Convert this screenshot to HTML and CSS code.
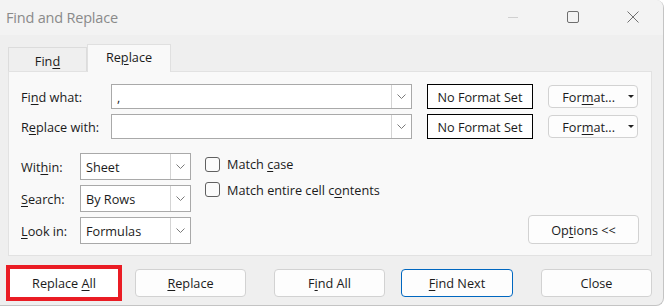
FILE: index.html
```html
<!DOCTYPE html>
<html>
<head>
<meta charset="utf-8">
<link rel="stylesheet" href="styles.css">
</head>
<body>
<div class="window">
  <div class="titlebar">
    <span class="title">Find and Replace</span>
    <div class="controls">
      <span class="ctl"><svg width="12" height="12" viewBox="0 0 12 12"><path d="M1 6.5h10" stroke="#d0d0d0" stroke-width="1"/></svg></span>
      <span class="ctl"><svg width="12" height="12" viewBox="0 0 12 12"><rect x="0.5" y="0.5" width="11" height="11" rx="1.5" fill="none" stroke="#6e6e6e" stroke-width="1"/></svg></span>
      <span class="ctl"><svg width="12" height="12" viewBox="0 0 12 12"><path d="M0.5 0.5l11 11M11.5 0.5l-11 11" stroke="#707070" stroke-width="1"/></svg></span>
    </div>
  </div>
  <div class="tabs">
    <div class="tab"><span>Fin<u>d</u></span></div>
    <div class="tab active"><span>Re<u>p</u>lace</span></div>
  </div>
  <div class="panel">
    <div class="find-grid">
      <span class="lbl">Fi<u>n</u>d what:</span>
      <div class="combo"><span class="val">,</span><span class="drop"><svg width="9" height="5" viewBox="0 0 9 5"><path d="M0.5 0.5l4 4 4-4" fill="none" stroke="#7a7a7a" stroke-width="1"/></svg></span></div>
      <div class="nofmt">No Format Set</div>
      <div class="btn fmt"><span>For<u>m</u>at...</span><span class="caret"></span></div>

      <span class="lbl">R<u>e</u>place with:</span>
      <div class="combo"><span class="val"></span><span class="drop"><svg width="9" height="5" viewBox="0 0 9 5"><path d="M0.5 0.5l4 4 4-4" fill="none" stroke="#7a7a7a" stroke-width="1"/></svg></span></div>
      <div class="nofmt">No Format Set</div>
      <div class="btn fmt"><span>For<u>m</u>at...</span><span class="caret"></span></div>
    </div>
    <div class="opts">
      <div class="sel-grid">
        <span class="lbl">Wit<u>h</u>in:</span>
        <div class="select"><span class="val">Sheet</span><span class="drop"><svg width="9" height="5" viewBox="0 0 9 5"><path d="M0.5 0.5l4 4 4-4" fill="none" stroke="#7a7a7a" stroke-width="1"/></svg></span></div>
        <span class="lbl"><u>S</u>earch:</span>
        <div class="select"><span class="val">By Rows</span><span class="drop"><svg width="9" height="5" viewBox="0 0 9 5"><path d="M0.5 0.5l4 4 4-4" fill="none" stroke="#7a7a7a" stroke-width="1"/></svg></span></div>
        <span class="lbl"><u>L</u>ook in:</span>
        <div class="select"><span class="val">Formulas</span><span class="drop"><svg width="9" height="5" viewBox="0 0 9 5"><path d="M0.5 0.5l4 4 4-4" fill="none" stroke="#7a7a7a" stroke-width="1"/></svg></span></div>
      </div>
      <div class="checks">
        <div class="check"><span class="box"></span><span>Match <u>c</u>ase</span></div>
        <div class="check"><span class="box"></span><span>Match entire cell c<u>o</u>ntents</span></div>
      </div>
      <div class="btn options"><span>Op<u>t</u>ions &lt;&lt;</span></div>
    </div>
  </div>
  <div class="actions">
    <div class="group g1">
      <div class="btn hl"><span>Replace <u>A</u>ll</span></div>
      <div class="btn act"><span><u>R</u>eplace</span></div>
    </div>
    <div class="group g2">
      <div class="btn act"><span>F<u>i</u>nd All</span></div>
      <div class="btn act primary"><span><u>F</u>ind Next</span></div>
    </div>
    <div class="btn act"><span>Close</span></div>
  </div>
</div>
</body>
</html>
```

FILE: styles.css
```css
* { box-sizing: border-box; }
html, body { margin: 0; padding: 0; background: #ffffff; }
body {
  font-family: "Open Sans", "Noto Sans", sans-serif;
  font-size: 12.7px;
  color: #1b1b1b;
}
u { text-decoration-thickness: 1px; text-underline-offset: 2px; }
.window {
  width: 664px;
  height: 306px;
  background: #efefef;
  border-right: 1px solid #c4c4c4;
  border-bottom: 1px solid #c4c4c4;
  border-radius: 0 8px 8px 0;
  overflow: hidden;
}
.titlebar {
  height: 35px;
  background: #f3f3f3;
  display: flex;
  align-items: center;
  padding-left: 6px;
}
.title {
  font-size: 14.5px;
  color: #8a8a8a;
  letter-spacing: -0.2px;
}
.controls { margin-left: auto; display: flex; height: 35px; }
.ctl {
  width: 60px;
  display: flex;
  align-items: center;
  justify-content: center;
  padding-bottom: 2px;
}
.tabs {
  height: 36px;
  display: flex;
  align-items: flex-end;
  padding-left: 8px;
}
.tab {
  width: 79px;
  height: 24px;
  border: 1px solid #dcdcdc;
  border-bottom: none;
  display: flex;
  align-items: center;
  justify-content: center;
  padding-top: 2px;
}
.tab.active {
  width: 84px;
  height: 28px;
  margin-bottom: -1px;
  background: #f9f9f9;
  border-color: #e0e0e0;
  position: relative;
  z-index: 1;
  padding-top: 0;
  padding-bottom: 4px;
}
.panel {
  margin-left: 8px;
  width: 644px;
  height: 185px;
  background: #f9f9f9;
  border: 1px solid #e2e2e2;
  padding: 12px 12px 11px 12px;
}
.find-grid {
  display: grid;
  grid-template-columns: 75px 301px 106px 90px;
  grid-auto-rows: 25px;
  column-gap: 15px;
  row-gap: 5px;
  align-items: center;
}
.lbl { white-space: nowrap; }
.combo, .select {
  height: 25px;
  background: #ffffff;
  border: 1px solid #a9a9a9;
  display: flex;
  align-items: stretch;
}
.val { flex: 1; padding-left: 5px; display: flex; align-items: center; }
.drop {
  width: 20px;
  border-left: 1px solid #d4d4d4;
  display: flex;
  align-items: center;
  justify-content: center;
}
.nofmt {
  height: 25px;
  background: #ffffff;
  border: 1px solid #000000;
  display: flex;
  align-items: center;
  justify-content: center;
}
.btn {
  background: #fdfdfd;
  border: 1px solid #d2d2d2;
  border-radius: 4px;
  display: flex;
  align-items: center;
  justify-content: center;
  white-space: nowrap;
}
.fmt {
  height: 23px;
  gap: 13px;
  justify-content: flex-end;
  padding-right: 3px;
}
.caret {
  width: 0; height: 0;
  border-left: 3px solid transparent;
  border-right: 3px solid transparent;
  border-top: 3px solid #202020;
}
.opts {
  margin-top: 14px;
  display: flex;
  height: 91px;
}
.sel-grid {
  display: grid;
  grid-template-columns: 59px 111px;
  grid-auto-rows: 27px;
  row-gap: 5px;
  align-items: center;
}
.select { height: 27px; }
.checks {
  margin-left: 14px;
  display: flex;
  flex-direction: column;
}
.check {
  height: 25px;
  display: flex;
  align-items: center;
  gap: 7px;
}
.check:first-child { height: 22px; margin-bottom: 2px; }
.box {
  width: 15px;
  height: 15px;
  border: 1px solid #606060;
  border-radius: 3px;
  background: #fbfbfb;
}
.options {
  margin-left: auto;
  align-self: flex-end;
  width: 111px;
  height: 29px;
}
.actions {
  margin-top: 9px;
  padding-left: 6px;
  height: 36px;
  display: flex;
  align-items: center;
  gap: 28px;
}
.group { display: flex; align-items: center; }
.g1 { gap: 13px; }
.g2 { gap: 16px; }
.act { width: 111px; height: 28px; }
.primary { border-color: #0067c0; width: 112px; }
.hl {
  width: 116px;
  height: 36px;
  border: 4px solid #ea1c24;
  border-radius: 0;
  background: #ffffff;
}
```
